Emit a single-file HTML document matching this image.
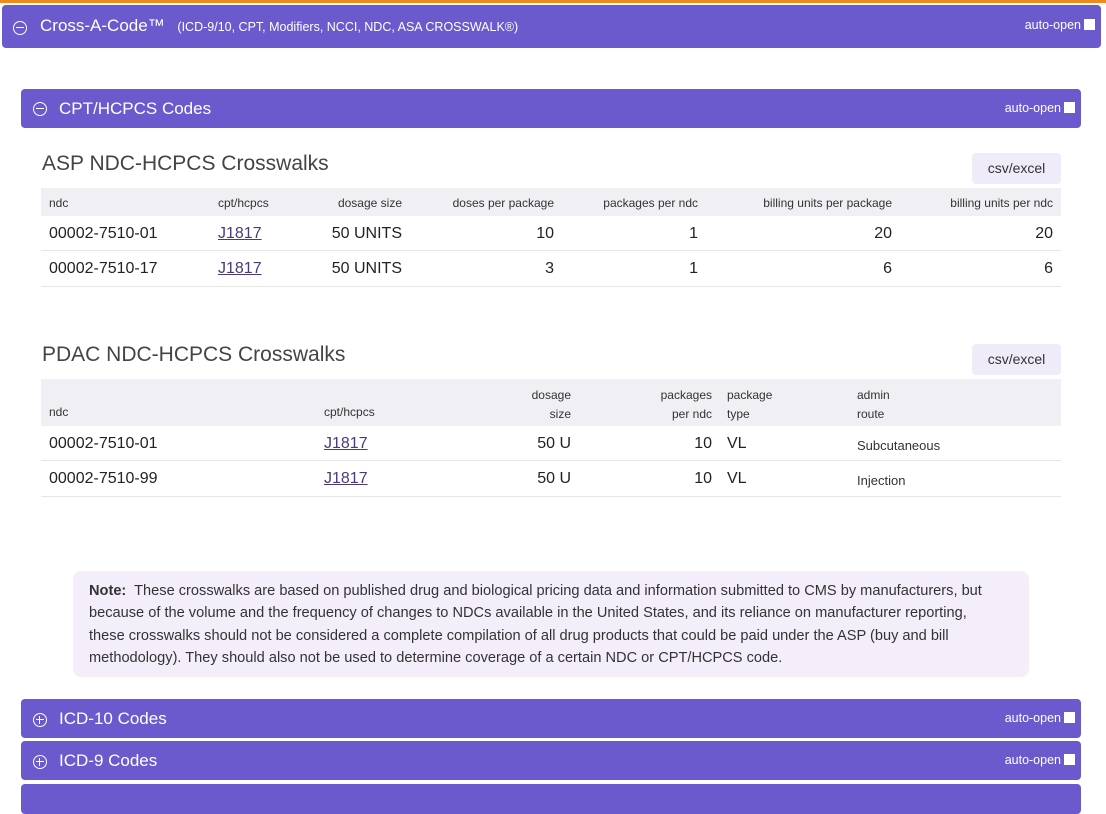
<!DOCTYPE html>
<html><head><meta charset="utf-8"><style>
*{margin:0;padding:0;box-sizing:border-box}
body{width:1106px;height:791px;overflow:hidden;background:#fff;font-family:"Liberation Sans",sans-serif;color:#222;position:relative}
.a{position:absolute;white-space:nowrap}
.bar{position:absolute;background:#6a5acd;border-radius:4px;color:#fff}
.bar .t{position:absolute;left:38px;top:0;font-size:17px}
.ic{position:absolute;width:14px;height:14px;border:1.6px solid #fff;border-radius:50%}
.ic:before{content:"";position:absolute;left:2px;right:2px;top:4.6px;height:1.6px;background:#fff}
.ic.p:after{content:"";position:absolute;top:2px;bottom:2px;left:4.6px;width:1.6px;background:#fff}
.ao{position:absolute;right:6px;font-size:12.5px}
.ao i{display:inline-block;width:11px;height:11px;background:#fff;margin-left:3px;vertical-align:-1px}
.h2{font-size:21px;color:#444}
.btn{position:absolute;background:#f0ebf8;border-radius:4px;color:#333;font-size:14px;text-align:center}
.hd{position:absolute;background:#f0eff4;left:41px;width:1020px}
.row{position:absolute;left:41px;width:1020px;border-bottom:1px solid #e6e6e6}
.s{font-size:12px;color:#333}
.m{font-size:16px;color:#222}
.r{text-align:right}
u{color:#4b3a7a}
</style></head><body>
<div class="a" style="left:0;top:0;width:1106px;height:3px;background:#f08a1a"></div>
<div class="bar" style="left:2px;top:5px;width:1099px;height:43px">
<div class="ic" style="left:11px;top:16px"></div>
<div class="t" style="top:11px;font-size:17px">Cross-A-Code™ <span style="font-size:12.5px;margin-left:8px">(ICD-9/10, CPT, Modifiers, NCCI, NDC, ASA CROSSWALK®)</span></div>
<div class="ao" style="top:13px">auto-open<i></i></div></div>

<div class="bar" style="left:21px;top:89px;width:1060px;height:39px">
<div class="ic" style="left:12px;top:13px"></div>
<div class="t" style="top:10px">CPT/HCPCS Codes</div>
<div class="ao" style="top:12px">auto-open<i></i></div></div>

<div class="a h2" style="left:42px;top:152px">ASP NDC-HCPCS Crosswalks</div>
<div class="btn" style="left:972px;top:153px;width:89px;height:31px;line-height:31px">csv/excel</div>
<div class="hd" style="top:188px;height:28px"></div>
<div class="a s" style="left:49px;top:196px">ndc</div>
<div class="a s" style="left:218px;top:196px">cpt/hcpcs</div>
<div class="a s" style="right:704px;top:196px">dosage size</div>
<div class="a s" style="right:552px;top:196px">doses per package</div>
<div class="a s" style="right:408px;top:196px">packages per ndc</div>
<div class="a s" style="right:214px;top:196px">billing units per package</div>
<div class="a s" style="right:53px;top:196px">billing units per ndc</div>
<div class="row" style="top:216px;height:35px"></div>
<div class="row" style="top:251px;height:36px"></div>
<div class="a m" style="left:49px;top:225px">00002-7510-01</div><div class="a m" style="left:218px;top:225px"><u>J1817</u></div>
<div class="a m" style="right:704px;top:225px">50 UNITS</div><div class="a m" style="right:552px;top:225px">10</div><div class="a m" style="right:408px;top:225px">1</div><div class="a m" style="right:214px;top:225px">20</div><div class="a m" style="right:53px;top:225px">20</div>
<div class="a m" style="left:49px;top:260px">00002-7510-17</div><div class="a m" style="left:218px;top:260px"><u>J1817</u></div>
<div class="a m" style="right:704px;top:260px">50 UNITS</div><div class="a m" style="right:552px;top:260px">3</div><div class="a m" style="right:408px;top:260px">1</div><div class="a m" style="right:214px;top:260px">6</div><div class="a m" style="right:53px;top:260px">6</div>

<div class="a h2" style="left:42px;top:343px">PDAC NDC-HCPCS Crosswalks</div>
<div class="btn" style="left:972px;top:344px;width:89px;height:31px;line-height:31px">csv/excel</div>
<div class="hd" style="top:379px;height:47px"></div>
<div class="a s" style="left:49px;top:405px">ndc</div>
<div class="a s" style="left:324px;top:405px">cpt/hcpcs</div>
<div class="a s r" style="right:535px;top:386px;line-height:19px">dosage<br>size</div>
<div class="a s r" style="right:394px;top:386px;line-height:19px">packages<br>per ndc</div>
<div class="a s" style="left:727px;top:386px;line-height:19px">package<br>type</div>
<div class="a s" style="left:857px;top:386px;line-height:19px">admin<br>route</div>
<div class="row" style="top:426px;height:35px"></div>
<div class="row" style="top:461px;height:36px"></div>
<div class="a m" style="left:49px;top:435px">00002-7510-01</div><div class="a m" style="left:324px;top:435px"><u>J1817</u></div>
<div class="a m" style="right:535px;top:435px">50 U</div><div class="a m" style="right:394px;top:435px">10</div><div class="a m" style="left:727px;top:435px">VL</div><div class="a s" style="left:857px;top:438px;font-size:13px">Subcutaneous</div>
<div class="a m" style="left:49px;top:470px">00002-7510-99</div><div class="a m" style="left:324px;top:470px"><u>J1817</u></div>
<div class="a m" style="right:535px;top:470px">50 U</div><div class="a m" style="right:394px;top:470px">10</div><div class="a m" style="left:727px;top:470px">VL</div><div class="a s" style="left:857px;top:473px;font-size:13px">Injection</div>

<div class="a" style="left:73px;top:571px;width:956px;height:106px;background:#f3eefa;border-radius:8px;padding:9px 16px;font-size:14.6px;line-height:22.4px;color:#333;overflow:hidden"><b>Note:</b>&nbsp; These crosswalks are based on published drug and biological pricing data and information submitted to CMS by manufacturers, but<br>because of the volume and the frequency of changes to NDCs available in the United States, and its reliance on manufacturer reporting,<br>these crosswalks should not be considered a complete compilation of all drug products that could be paid under the ASP (buy and bill<br>methodology). They should also not be used to determine coverage of a certain NDC or CPT/HCPCS code.</div>

<div class="bar" style="left:21px;top:699px;width:1060px;height:39px">
<div class="ic p" style="left:12px;top:14px"></div>
<div class="t" style="top:10px">ICD-10 Codes</div>
<div class="ao" style="top:12px">auto-open<i></i></div></div>
<div class="bar" style="left:21px;top:741px;width:1060px;height:39px">
<div class="ic p" style="left:12px;top:14px"></div>
<div class="t" style="top:10px">ICD-9 Codes</div>
<div class="ao" style="top:12px">auto-open<i></i></div></div>
<div class="bar" style="left:21px;top:784px;width:1060px;height:30px"></div>
</body></html>
